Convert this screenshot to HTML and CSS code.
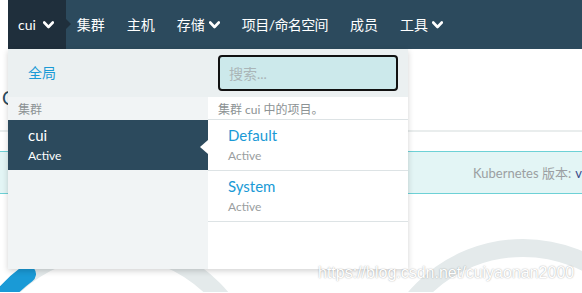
FILE: index.html
```html
<!DOCTYPE html>
<html lang="zh">
<head>
<meta charset="utf-8">
<title>Rancher</title>
<link rel="stylesheet" href="styles.css">
</head>
<body>
<header class="nav">
  <div class="nav-cluster">
    <span>cui</span>
    <svg class="chev" width="11" height="8" viewBox="0 0 11 8"><polyline points="1.2,1.5 5.5,6 9.8,1.5" fill="none" stroke="#fff" stroke-width="2.6" stroke-linecap="round" stroke-linejoin="round"/></svg>
  </div>
  <div class="nav-item">集群</div>
  <div class="nav-item">主机</div>
  <div class="nav-item">存储<svg class="chev" width="11" height="8" viewBox="0 0 11 8"><polyline points="1.2,1.5 5.5,6 9.8,1.5" fill="none" stroke="#fff" stroke-width="2.6" stroke-linecap="round" stroke-linejoin="round"/></svg></div>
  <div class="nav-item"><span class="tight">项目/命名空间</span></div>
  <div class="nav-item">成员</div>
  <div class="nav-item">工具<svg class="chev" width="11" height="8" viewBox="0 0 11 8"><polyline points="1.2,1.5 5.5,6 9.8,1.5" fill="none" stroke="#fff" stroke-width="2.6" stroke-linecap="round" stroke-linejoin="round"/></svg></div>
</header>

<main class="page">
  <div class="title-row"><h1 class="title">Cluster: cui</h1></div>
  <div class="info-band">
    <span class="info-label">Kubernetes 版本:</span>
    <span class="info-value">v1.14.6</span>
  </div>
  <svg class="charts" width="582" height="98" viewBox="0 0 582 98">
    <circle cx="112" cy="196" r="143" fill="none" stroke="#e4eaeb" stroke-width="18"/>
    <path d="M 27 80 A 143 143 0 0 0 -31 196" fill="none" stroke="#1a9ad6" stroke-width="18" stroke-linecap="round"/>
    <circle cx="523" cy="196" r="142" fill="none" stroke="#e4eaeb" stroke-width="18"/>
  </svg>
</main>

<div class="menu">
  <div class="col col-left">
    <div class="col-top"><span class="global">全局</span></div>
    <div class="col-hdr">集群</div>
    <div class="row row-sel">
      <div class="row-name">cui</div>
      <div class="row-status">Active</div>
    </div>
  </div>
  <div class="col col-right">
    <div class="col-top col-top-search"><input class="search" type="text" placeholder="搜索..."></div>
    <div class="col-hdr col-hdr-right">集群 cui 中的项目。</div>
    <div class="row row-item">
      <div class="row-name">Default</div>
      <div class="row-status">Active</div>
    </div>
    <div class="row row-item">
      <div class="row-name">System</div>
      <div class="row-status">Active</div>
    </div>
  </div>
</div>

<div class="watermark">https://blog.csdn.net/cuiyaonan2000</div>
</body>
</html>
```

FILE: styles.css
```css
html, body {
  margin: 0;
  padding: 0;
  background: #fff;
  overflow: hidden;
  width: 582px;
  height: 293px;
  font-family: "Lato", "Noto Sans CJK SC", sans-serif;
}

.nav {
  display: flex;
  align-items: center;
  height: 49px;
  margin-left: 8px;
  background: #2c4a5d;
  color: #fff;
  font-size: 14px;
}

.nav-cluster {
  position: relative;
  display: flex;
  align-items: center;
  gap: 7px;
  height: 49px;
  padding: 0 12px 0 10px;
  background: #1f2f3c;
  font-size: 14px;
}

.nav-cluster::after {
  content: "";
  position: absolute;
  right: -5px;
  top: 19px;
  border-top: 5px solid transparent;
  border-bottom: 5px solid transparent;
  border-left: 5px solid #1f2f3c;
}

.nav-cluster span {
  line-height: 20px;
}

.nav-item {
  display: flex;
  align-items: center;
  gap: 4px;
  padding: 0 11px;
  line-height: 20px;
  white-space: nowrap;
}

.tight {
  letter-spacing: -0.6px;
}

.chev {
  display: block;
}

.page {
  white-space: nowrap;
}

.title-row {
  height: 81px;
  border-bottom: 2px solid #e9eded;
  display: flex;
  align-items: flex-end;
  margin-bottom: 19px;
}

.title {
  margin: 0 0 20px 2px;
  font-size: 19px;
  font-weight: 400;
  color: #2c4a5d;
  line-height: 24px;
}

.info-band {
  height: 41px;
  border-top: 1px solid #6dd1d6;
  border-bottom: 1px solid #6dd1d6;
  background: #e3f5f5;
  display: flex;
  align-items: center;
  padding-left: 473px;
  gap: 4px;
  font-size: 13px;
}

.info-label {
  color: #9b9fa2;
}

.info-value {
  color: #3b4a8a;
}

.charts {
  display: block;
}

.menu {
  position: absolute;
  left: 8px;
  top: 49px;
  width: 400px;
  height: 220px;
  display: grid;
  grid-template-columns: 200px 200px;
  box-shadow: 0 2px 6px rgba(0, 0, 0, 0.18);
}

.col-left {
  background: #f1f4f5;
}

.col-right {
  background: #fff;
}

.col-top {
  height: 48px;
  background: #ebf0f1;
  display: flex;
  align-items: center;
  box-sizing: border-box;
}

.global {
  padding-left: 20px;
  color: #1a9ad6;
  font-size: 14px;
  line-height: 20px;
}

.col-top-search {
  padding: 0 10px;
}

.search {
  box-sizing: border-box;
  width: 180px;
  height: 36px;
  margin: 0;
  padding: 0 9px;
  border: 2px solid #111;
  border-radius: 4px;
  background: #cce9eb;
  font-family: "Lato", "Noto Sans CJK SC", sans-serif;
  font-size: 14px;
  color: #333;
  outline: none;
}

.search::placeholder {
  color: #aab5b7;
}

.col-hdr {
  height: 23px;
  box-sizing: border-box;
  padding-left: 10px;
  display: flex;
  align-items: center;
  font-size: 12px;
  color: #8c9294;
}

.col-hdr-right {
  border-bottom: 1px solid #dde3e5;
}

.row {
  display: flex;
  flex-direction: column;
  justify-content: center;
  padding-left: 20px;
  box-sizing: border-box;
}

.row-sel {
  position: relative;
  height: 50px;
  background: #2c4a5d;
  color: #fff;
}

.row-sel::after {
  content: "";
  position: absolute;
  right: 0;
  top: 20px;
  border-top: 7px solid transparent;
  border-bottom: 7px solid transparent;
  border-right: 8px solid #fff;
}

.row-item {
  height: 51px;
  border-bottom: 1px solid #dde3e5;
}

.row-name {
  font-size: 15px;
  line-height: 22px;
}

.row-item .row-name {
  color: #1a9ad6;
}

.row-status {
  font-size: 12px;
  line-height: 20px;
}

.row-item .row-status {
  color: #9a9ea0;
}

.watermark {
  position: absolute;
  left: 318px;
  top: 263px;
  font-family: "Liberation Sans", Arial, sans-serif;
  font-size: 16px;
  line-height: 20px;
  color: #fff;
  text-shadow: 0 0 1.5px rgba(0, 0, 0, 0.4);
  white-space: nowrap;
}
```
